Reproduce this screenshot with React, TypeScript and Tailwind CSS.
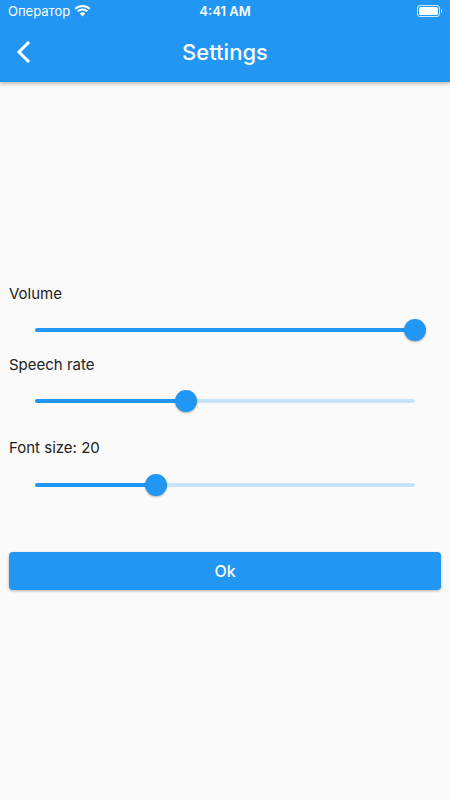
import React from "react";

function Slider({ value }: { value: number }) {
  return (
    <div className="relative h-[48px] w-full">
      <div className="absolute left-[26px] right-[26px] top-[22px] h-[4px] rounded-full bg-[#c8e4fb]" />
      <div
        className="absolute left-[26px] top-[22px] h-[4px] rounded-full bg-[#2196f3]"
        style={{ width: `calc((100% - 52px) * ${value})` }}
      />
      <div
        className="absolute top-[13px] h-[22px] w-[22px] -translate-x-1/2 rounded-full bg-[#2196f3] shadow-[0_1px_2px_rgba(0,0,0,0.3)]"
        style={{ left: `calc(26px + (100% - 52px) * ${value})` }}
      />
    </div>
  );
}

export default function App() {
  return (
    <div
      className="flex min-h-[800px] w-[450px] flex-col bg-[#fafafa]"
      style={{ fontFamily: "Inter, Roboto, 'Liberation Sans', sans-serif" }}
    >
      <div className="relative z-10 flex h-[82px] flex-col bg-[#2196f3] shadow-[0_2px_4px_rgba(0,0,0,0.25)]">
        <div className="relative flex h-[22px] items-center px-[8px] text-white">
          <span className="text-[13px] leading-none">Оператор</span>
          <svg width="17" height="13" viewBox="0 0 17 13" className="ml-[4px] mt-[-1px]">
            <path d="M8.5 12.5 L5.8 9.6 A3.9 3.9 0 0 1 11.2 9.6 Z" fill="white" />
            <path d="M3.6 7.4 A7 7 0 0 1 13.4 7.4" stroke="white" strokeWidth="2" fill="none" />
            <path d="M1.2 4.9 A10.5 10.5 0 0 1 15.8 4.9" stroke="white" strokeWidth="2" fill="none" />
          </svg>
          <span className="absolute left-1/2 -translate-x-1/2 text-[13px] font-semibold leading-none">4:41 AM</span>
          <div className="absolute right-[8px] top-[5px] flex items-center">
            <div className="flex h-[12px] w-[23px] items-center rounded-[3px] border border-white/80 p-[1px]">
              <div className="h-full w-full rounded-[1.5px] bg-white" />
            </div>
            <div className="ml-[1px] h-[4px] w-[1.5px] rounded-r bg-white/80" />
          </div>
        </div>
        <div className="relative flex flex-1 items-center justify-center">
          <svg width="16" height="22" viewBox="0 0 16 22" className="absolute left-[15px] top-[19px]">
            <polyline points="13,2 4,11 13,20" stroke="white" strokeWidth="3" fill="none" strokeLinecap="square" />
          </svg>
          <span className="text-[22px] font-medium text-white">Settings</span>
        </div>
      </div>

      <div className="flex flex-col px-[9px] pt-[202px]">
        <div className="h-[20px] text-[15px] leading-[20px] text-[#212121]">Volume</div>
        <div className="mt-[2px]">
          <Slider value={1} />
        </div>
        <div className="mt-[1px] h-[20px] text-[15px] leading-[20px] text-[#212121]">Speech rate</div>
        <div className="mt-[2px]">
          <Slider value={0.397} />
        </div>
        <div className="mt-[13px] h-[20px] text-[15px] leading-[20px] text-[#212121]">Font size: 20</div>
        <div className="mt-[3px]">
          <Slider value={0.318} />
        </div>
        <button className="mt-[43px] flex h-[38px] w-full items-center justify-center rounded-[4px] bg-[#2196f3] text-[16px] font-medium text-white shadow-[0_1px_3px_rgba(0,0,0,0.3)]">
          Ok
        </button>
      </div>
    </div>
  );
}
